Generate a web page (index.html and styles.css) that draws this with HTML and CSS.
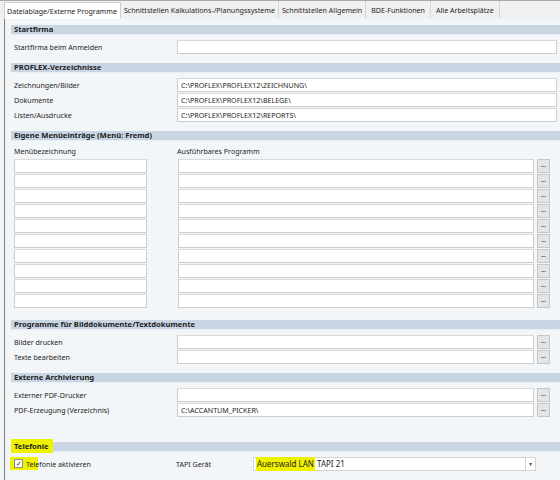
FILE: index.html
```html
<!DOCTYPE html>
<html lang="de">
<head>
  <meta charset="UTF-8" />
  <title>Einstellungen</title>
  <link rel="stylesheet" href="styles.css">
</head>
<body>
  <div class="tabs">
    <div class="tab active">Dateiablage/Externe Programme</div>
    <div class="tab">Schnittstellen Kalkulations-/Planungssysteme</div>
    <div class="tab">Schnittstellen Allgemein</div>
    <div class="tab wide">BDE-Funktionen</div>
    <div class="tab wide">Alle Arbeitsplätze</div>
  </div>

  <div class="page">
    <div class="section">
      <div class="head">Startfirma</div>
      <div class="row">
        <span class="label">Startfirma beim Anmelden</span>
        <span class="field"></span>
      </div>
    </div>

    <div class="section">
      <div class="head">PROFLEX-Verzeichnisse</div>
      <div class="row">
        <span class="label">Zeichnungen/Bilder</span>
        <span class="field">C:\PROFLEX\PROFLEX12\ZEICHNUNG\</span>
      </div>
      <div class="row">
        <span class="label">Dokumente</span>
        <span class="field">C:\PROFLEX\PROFLEX12\BELEGE\</span>
      </div>
      <div class="row">
        <span class="label">Listen/Ausdrucke</span>
        <span class="field">C:\PROFLEX\PROFLEX12\REPORTS\</span>
      </div>
    </div>

    <div class="section menu">
      <div class="head">Eigene Menüeinträge (Menü: Fremd)</div>
      <div class="row cols">
        <span class="label short">Menübezeichnung</span>
        <span class="label">Ausführbares Programm</span>
      </div>
      <div id="menuRows"></div>
    </div>

    <div class="section">
      <div class="head">Programme für Bilddokumente/Textdokumente</div>
      <div class="row btn-row">
        <span class="label">Bilder drucken</span>
        <span class="field"></span>
        <span class="dots">...</span>
      </div>
      <div class="row btn-row">
        <span class="label">Texte bearbeiten</span>
        <span class="field"></span>
        <span class="dots">...</span>
      </div>
    </div>

    <div class="section">
      <div class="head">Externe Archivierung</div>
      <div class="row btn-row">
        <span class="label">Externer PDF-Drucker</span>
        <span class="field"></span>
        <span class="dots">...</span>
      </div>
      <div class="row btn-row">
        <span class="label">PDF-Erzeugung (Verzeichnis)</span>
        <span class="field">C:\ACCANTUM_PICKER\</span>
        <span class="dots">...</span>
      </div>
    </div>

    <div class="section telefonie">
      <div class="head"><span class="mark">Telefonie</span></div>
      <div class="row tel-row">
        <span class="check-wrap">
          <span class="mark-box"></span>
          <span class="check">✓</span>
          <span class="check-label">Telefonie aktivieren</span>
        </span>
        <span class="tapi">TAPI Gerät</span>
        <span class="combo">
          <span class="combo-text"><span class="mark">Auerswald LAN</span> TAPI 21</span>
          <span class="arrow">▾</span>
        </span>
      </div>
    </div>
  </div>

  <script>
    const rows = document.getElementById('menuRows');
    for (let i = 0; i < 10; i++) {
      rows.innerHTML += '<div class="row btn-row menu-row"><span class="field short"></span><span class="field"></span><span class="dots">...</span></div>';
    }
  </script>
</body>
</html>
```

FILE: styles.css
```css
body {
  margin: 0;
  background: #f3f6f9;
  font-family: 'Noto Sans', sans-serif;
  font-size: 7.1px;
  color: #1e1e1e;
  width: 560px;
  height: 480px;
  overflow: hidden;
}
.tabs {
  display: flex;
  height: 18px;
  background: #f0f0f0;
  border-top: 1px solid #a9a9a9;
  padding-left: 4px;
  align-items: stretch;
}
.tab {
  display: flex;
  align-items: center;
  padding: 0 3px;
  border-right: 1px solid #d6d6d6;
  white-space: nowrap;
}
.tab.active {
  background: #fff;
  border: 1px solid #cfcfcf;
  border-bottom: none;
  margin-top: 1px;
  padding: 0 3px 0 2px;
}
.tab.wide {
  padding: 0 5px;
}
.page {
  margin-left: 4px;
  border-left: 1px solid #7d7d7d;
  height: 460px;
  padding-top: 6px;
}
.section {
  margin-left: 6px;
  margin-bottom: 9px;
}
.head {
  height: 9px;
  line-height: 9px;
  background: #c9d5e3;
  border-bottom: 1px solid #e8eef5;
  padding-left: 3px;
  font-weight: bold;
  font-size: 7.6px;
  margin-bottom: 4px;
}
.row {
  display: flex;
  align-items: center;
  height: 15px;
  padding: 0 3px;
}
.label {
  width: 163px;
  flex: none;
}
.field {
  flex: 1;
  height: 12px;
  line-height: 12px;
  background: #fff;
  border: 1px solid #cdcdcd;
  border-top-color: #d9d9d9;
  padding-left: 3px;
  white-space: nowrap;
  overflow: hidden;
}
.btn-row {
  padding-right: 10px;
}
.dots {
  flex: none;
  width: 11px;
  height: 12px;
  margin-left: 3px;
  background: #e4e4e4;
  border: 1px solid #c6c6c6;
  font-size: 6px;
  font-weight: bold;
  line-height: 11px;
  text-align: center;
  color: #333;
}
.cols {
  height: 12px;
  margin-top: 3px;
  margin-bottom: 1px;
}
.cols .short {
  width: 163px;
}
.menu {
  margin-bottom: 12px;
}
.menu-row .field.short {
  flex: none;
  width: 128px;
  margin-right: 31px;
}
.telefonie {
  margin-top: 25px;
}
.telefonie .head .mark {
  padding: 2px 4px 2px 3px;
  margin-left: -3px;
}
.mark {
  background: #eef200;
}
.check-wrap {
  width: 162px;
  flex: none;
  display: flex;
  align-items: center;
  position: relative;
}
.mark-box {
  position: absolute;
  left: -4px;
  top: -2px;
  width: 28px;
  height: 13px;
  background: #eef200;
}
.check {
  position: relative;
  width: 7px;
  height: 7px;
  border: 1px solid #8d8d8d;
  background: #fff;
  font-size: 7px;
  line-height: 7px;
  text-align: center;
  color: #333;
  margin-right: 3px;
}
.check-label {
  position: relative;
}
.tapi {
  width: 77px;
  flex: none;
}
.combo {
  display: flex;
  width: 281px;
  height: 12px;
  background: #fff;
  border: 1px solid #d3d3d3;
}
.combo-text {
  flex: 1;
  line-height: 12px;
  padding-left: 2px;
  font-size: 8px;
}
.combo-text .mark {
  padding: 1px 1px 2px 1px;
}
.arrow {
  width: 9px;
  border-left: 1px solid #d3d3d3;
  font-size: 6px;
  line-height: 12px;
  text-align: center;
  color: #555;
}
```
